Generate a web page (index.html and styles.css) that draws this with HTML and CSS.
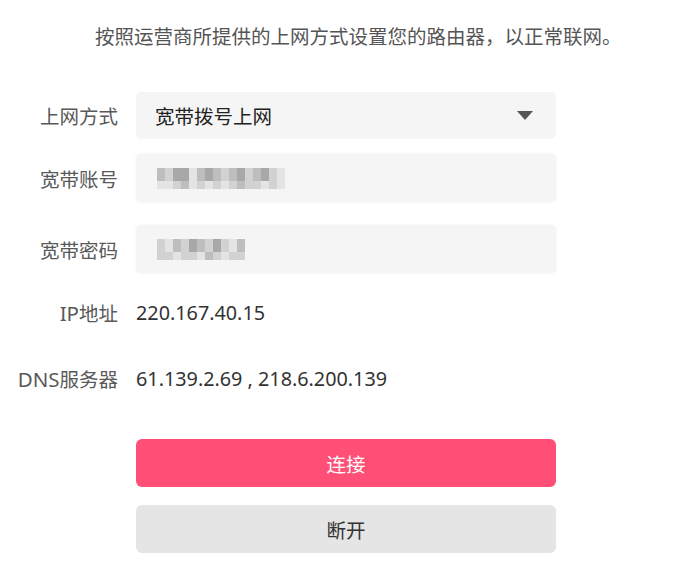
FILE: index.html
```html
<!DOCTYPE html>
<html>
    <head>
        <meta charset="utf-8">
        <link rel="stylesheet" href="styles.css">
    </head>

    <body>
        <p class="tip">按照运营商所提供的上网方式设置您的路由器，以正常联网。</p>

        <div class="form">
            <div class="row">
                <label class="label">上网方式</label>
                <div class="select">
                    <span>宽带拨号上网</span>
                    <span class="arrow"></span>
                </div>
            </div>

            <div class="row row-account">
                <label class="label">宽带账号</label>
                <div class="input">
                    <div class="mosaic">
                        <div class="line">
                            <i class="m2"></i><i class="m1"></i><i class="m3"></i><i class="m3"></i><i class="m0"></i><i class="m2"></i><i class="m3"></i><i class="m2"></i><i class="m1"></i><i class="m2"></i><i class="m3"></i><i class="m1"></i><i class="m2"></i><i class="m3"></i><i class="m1"></i><i class="m0"></i>
                        </div>
                        <div class="line low">
                            <i class="m0"></i><i class="m0"></i><i class="m1"></i><i class="m2"></i><i class="m0"></i><i class="m1"></i><i class="m0"></i><i class="m1"></i><i class="m0"></i><i class="m1"></i><i class="m2"></i><i class="m1"></i><i class="m1"></i><i class="m0"></i><i class="m1"></i><i class="m0"></i>
                        </div>
                    </div>
                </div>
            </div>

            <div class="row row-password">
                <label class="label">宽带密码</label>
                <div class="input">
                    <div class="mosaic">
                        <div class="line">
                            <i class="m1"></i><i class="m0"></i><i class="m2"></i><i class="m1"></i><i class="m3"></i><i class="m2"></i><i class="m1"></i><i class="m3"></i><i class="m1"></i><i class="m0"></i><i class="m2"></i>
                        </div>
                        <div class="line low">
                            <i class="m1"></i><i class="m1"></i><i class="m0"></i><i class="m1"></i><i class="m1"></i><i class="m0"></i><i class="m2"></i><i class="m1"></i><i class="m0"></i><i class="m1"></i><i class="m1"></i>
                        </div>
                    </div>
                </div>
            </div>

            <div class="row row-ip">
                <label class="label"><span class="latin">IP</span>地址</label>
                <div class="value">220.167.40.15</div>
            </div>

            <div class="row row-dns">
                <label class="label"><span class="latin">DNS</span>服务器</label>
                <div class="value">61.139.2.69 , 218.6.200.139</div>
            </div>

            <div class="row row-connect">
                <span class="label"></span>
                <button class="btn btn-primary">连接</button>
            </div>

            <div class="row row-disconnect">
                <span class="label"></span>
                <button class="btn">断开</button>
            </div>
        </div>
    </body>
</html>
```

FILE: styles.css
```css
body {
    margin: 0;
    background: #fff;
    color: #333;
    font-family: "Noto Sans", "Noto Sans CJK SC", sans-serif;
    font-size: 19.5px;
}

.tip {
    margin: 24px 0 0 95px;
    line-height: 26px;
    color: #555;
}

.form {
    display: flex;
    flex-direction: column;
    margin-top: 41px;
}

.row {
    display: flex;
    align-items: center;
    gap: 18px;
    height: 48px;
}

.row-account {
    margin-top: 15px;
}

.row-password {
    margin-top: 23px;
}

.row-ip {
    margin-top: 15px;
}

.row-dns {
    margin-top: 18px;
}

.row-connect {
    margin-top: 37px;
}

.row-disconnect {
    margin-top: 18px;
}

.label {
    width: 118px;
    flex-shrink: 0;
    text-align: right;
    color: #595959;
}

.latin {
    font-size: 20.5px;
}

.select,
.input {
    box-sizing: border-box;
    width: 420px;
    height: 48px;
    background: #f5f5f5;
    border-radius: 5px;
    display: flex;
    align-items: center;
}

.select {
    height: 47px;
    justify-content: space-between;
    padding: 0 23px 0 19px;
    color: #222;
}

.arrow {
    width: 0;
    height: 0;
    border-left: 8px solid transparent;
    border-right: 8px solid transparent;
    border-top: 9px solid #555;
}

.input {
    padding-left: 21px;
    box-shadow: 0 0 2px 1px #f8f8f8;
}

.mosaic {
    display: flex;
    flex-direction: column;
}

.line {
    display: flex;
    height: 13px;
}

.line.low {
    height: 8px;
}

.line i {
    display: block;
    width: 8px;
}

.m0 { background: #e4e4e4; }
.m1 { background: #d2d2d2; }
.m2 { background: #bebebe; }
.m3 { background: #a8a8a8; }

.value {
    color: #333;
    font-size: 19.8px;
}

.btn {
    width: 420px;
    height: 48px;
    border: 0;
    border-radius: 6px;
    background: #e5e5e5;
    color: #333;
    font-family: inherit;
    font-size: 19.5px;
}

.btn-primary {
    background: #ff4f77;
    color: #fff;
}

.btn:focus {
    outline: none;
}
```
